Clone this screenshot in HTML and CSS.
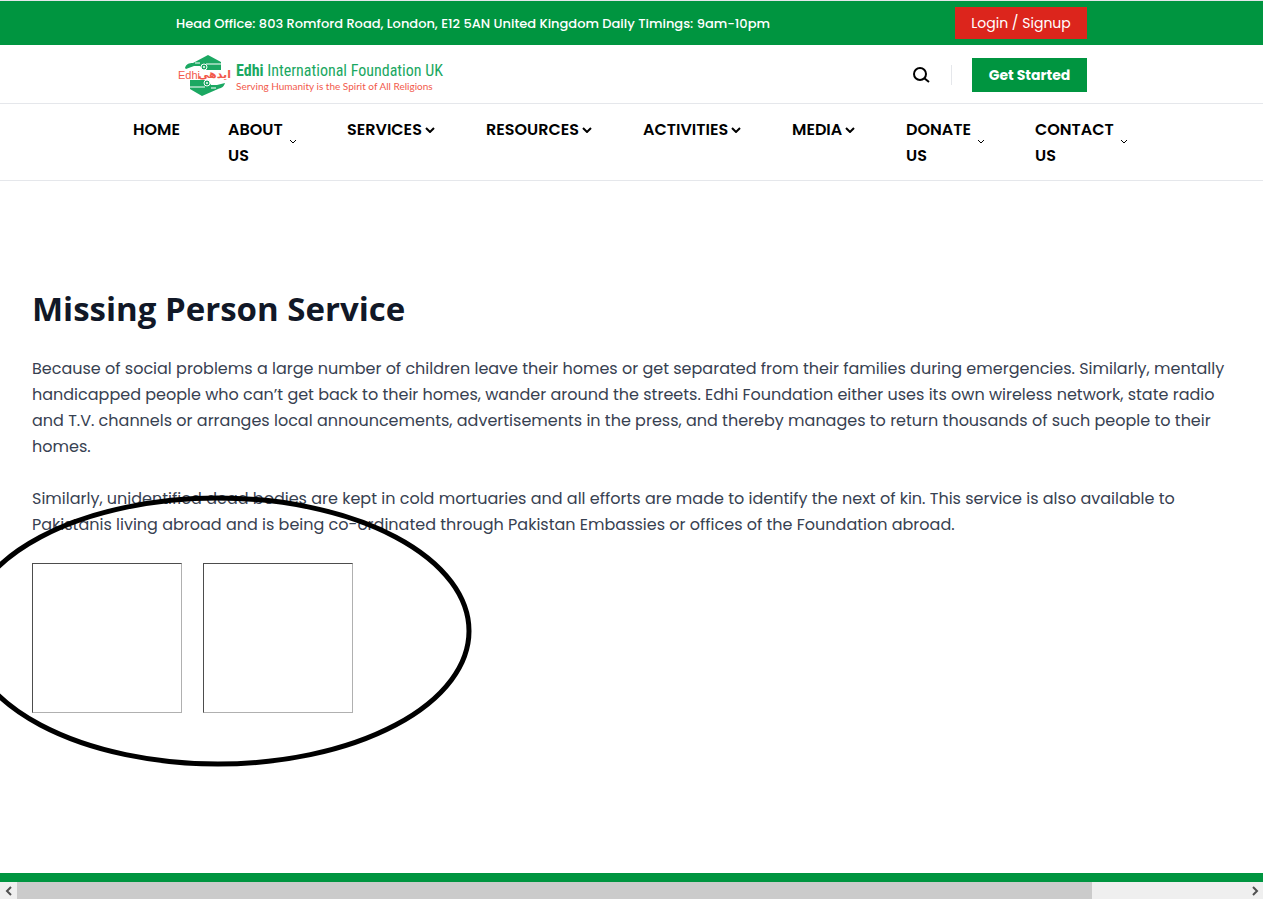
FILE: index.html
```html
<!DOCTYPE html>
<html lang="en">
<head>
<meta charset="utf-8">
<title>Missing Person Service - Edhi International Foundation UK</title>
<meta name="viewport" content="width=device-width, initial-scale=1">
<link rel="stylesheet" href="styles.css">
</head>
<body>
<div class="topbar">
  <div class="container topbar-row">
    <p class="office">Head Office: 803 Romford Road, London, E12 5AN United Kingdom Daily Timings: 9am-10pm</p>
    <button class="login" type="button">Login / Signup</button>
  </div>
</div>
<header class="header">
  <div class="container header-row">
    <a class="logo" href="#">
      <svg class="emblem" viewBox="0 0 54 42" width="54" height="42" aria-hidden="true">
        <path fill="#1ba862" d="M7 13C8 9 11 8 15 8L30 0L43 7V15H25L22 11L16 11L8 14Z"/>
        <path fill="#1ba862" d="M12 25H30L33 30L39 30L47 28C46 32 43 33 40 34L24 41L12 34Z"/>
        <path stroke="#fff" fill="none" d="M17 8H22M28 9H43M12 32H27M33 33H38"/>
        <circle cx="26" cy="12" r="3" fill="#1ba862" stroke="#fff"/>
        <circle cx="26" cy="12" r="1" fill="#fff"/>
        <circle cx="29" cy="28" r="3" fill="#1ba862" stroke="#fff"/>
        <circle cx="29" cy="28" r="1" fill="#fff"/>
        <text class="emblem-en" x="0" y="24">Edhi</text>
        <text class="emblem-ur" x="53" y="23" direction="rtl">ایدھی</text>
      </svg>
      <span class="wordmark">
        <span class="brand"><b>Edhi</b> International Foundation UK</span>
        <span class="tagline">Serving Humanity is the Spirit of All Religions</span>
      </span>
    </a>
    <div class="actions">
      <button class="search" type="button" aria-label="Search">
        <svg viewBox="0 0 18 18" width="18" height="18" fill="none" stroke="#000" stroke-width="2"><circle cx="8" cy="8" r="6"/><path d="M12 12L17 16"/></svg>
      </button>
      <span class="divider"></span>
      <button class="start" type="button">Get Started</button>
    </div>
  </div>
</header>
<nav class="nav" aria-label="Main">
  <ul class="menu">
    <li><a href="#">HOME</a></li>
    <li><a class="wrap" href="#">ABOUT US<svg class="chev small" viewBox="0 0 8 8"><path d="M1 1L4 4L7 1"/></svg></a></li>
    <li><a href="#">SERVICES<svg class="chev" viewBox="0 0 10 6"><path d="M1 1L5 5L9 1"/></svg></a></li>
    <li><a href="#">RESOURCES<svg class="chev" viewBox="0 0 10 6"><path d="M1 1L5 5L9 1"/></svg></a></li>
    <li><a href="#">ACTIVITIES<svg class="chev" viewBox="0 0 10 6"><path d="M1 1L5 5L9 1"/></svg></a></li>
    <li><a href="#">MEDIA<svg class="chev" viewBox="0 0 10 6"><path d="M1 1L5 5L9 1"/></svg></a></li>
    <li><a class="wrap" href="#">DONATE US<svg class="chev small" viewBox="0 0 8 8"><path d="M1 1L4 4L7 1"/></svg></a></li>
    <li><a class="wrap" href="#">CONTACT US<svg class="chev small" viewBox="0 0 8 8"><path d="M1 1L4 4L7 1"/></svg></a></li>
  </ul>
</nav>
<main class="content">
  <h1>Missing Person Service</h1>
  <p>Because of social problems a large number of children leave their homes or get separated from their families during emergencies. Similarly, mentally handicapped people who can’t get back to their homes, wander around the streets. Edhi Foundation either uses its own wireless network, state radio and T.V. channels or arranges local announcements, advertisements in the press, and thereby manages to return thousands of such people to their homes.</p>
  <p>Similarly, unidentified dead bodies are kept in cold mortuaries and all efforts are made to identify the next of kin. This service is also available to Pakistanis living abroad and is being co-ordinated through Pakistan Embassies or offices of the Foundation abroad.</p>
  <div class="photos">
    <div class="photo"></div>
    <div class="photo"></div>
    <svg class="ring" viewBox="0 0 508 272" width="508" height="272" aria-hidden="true"><ellipse cx="254" cy="136" rx="251" ry="133" fill="none" stroke="#000" stroke-width="5"/></svg>
  </div>
</main>
<footer class="footer"></footer>
<div class="scroller">
  <button type="button" aria-label="Scroll left"><svg viewBox="0 0 8 10" width="8" height="10"><path d="M6 1L2 5L6 9"/></svg></button>
  <div class="track"><div class="thumb"></div></div>
  <button type="button" aria-label="Scroll right"><svg viewBox="0 0 8 10" width="8" height="10"><path d="M2 1L6 5L2 9"/></svg></button>
</div>
</body>
</html>
```
FILE: styles.css
```css
* { box-sizing: border-box; margin: 0; padding: 0; }
body {
  min-height: 100vh;
  display: flex;
  flex-direction: column;
  overflow-x: hidden;
  background: #fff;
  color: #000;
  font: 16px/26px Poppins, Inter, "Open Sans", sans-serif;
}
button { border: 0; background: none; font: inherit; cursor: pointer; }
a { color: inherit; text-decoration: none; }
.container { width: 100%; max-width: 911px; margin: 0 auto; }

.topbar { background: #009540; border-top: 1px solid #e5e7eb; color: #fff; }
.topbar-row { display: flex; align-items: center; justify-content: space-between; height: 44px; }
.office { font-size: 13px; font-weight: 500; white-space: nowrap; padding-top: 1px; }
.login { background: #dc251c; color: #fff; font-size: 14px; width: 132px; height: 32px; white-space: nowrap; }

.header { border-bottom: 1px solid #e5e7eb; padding-top: 2px; }
.header-row { display: flex; align-items: center; justify-content: space-between; height: 56px; }
.logo { display: flex; align-items: center; gap: 4px; padding: 2px 0 0 2px; }
.emblem { overflow: visible; }
.emblem-en { font: 11px "Liberation Sans", sans-serif; fill: #f2594b; }
.emblem-ur { font: bold 11px "DejaVu Sans", sans-serif; fill: #f2594b; }
.wordmark { display: flex; flex-direction: column; white-space: nowrap; padding-top: 2px; }
.brand { color: #1ba862; font: 16px/18px "Liberation Sans Narrow", "Roboto Condensed", "Liberation Sans", sans-serif; }
.tagline { color: #f2594b; font: 10px/12px Lato, sans-serif; }
.actions { display: flex; align-items: center; gap: 20px; }
.search { display: flex; padding-right: 1px; }
.divider { width: 1px; height: 20px; background: #e5e7eb; }
.start { width: 115px; height: 34px; background: #009540; color: #fff; font-size: 14px; font-weight: 700; white-space: nowrap; }

.nav { border-bottom: 1px solid #e5e7eb; padding: 13px 0 11px; }
.menu {
  display: grid;
  grid-template-columns: 47px 71px 91px 109px 101px 66px 81px 95px;
  column-gap: 48px;
  justify-content: center;
  list-style: none;
  font-weight: 600;
}
.menu a { display: flex; align-items: center; gap: 3px; }
.menu a.wrap { justify-content: space-between; padding-right: 2px; }
.chev { width: 10px; height: 6px; flex: none; fill: none; stroke: #000; stroke-width: 2; }
.chev.small { width: 8px; height: 8px; stroke-width: 1; }

.content { flex: 1; padding: 108px 32px 0; color: #374151; }
h1 { color: #111827; font: 700 33px/40px "Open Sans", sans-serif; margin-bottom: 27px; }
.content p { margin-bottom: 26px; }
.content p:last-of-type { margin-bottom: 25px; }
.photos { position: relative; display: flex; gap: 21px; }
.photo { width: 150px; height: 150px; border: 1px solid; border-color: #4d4d4d #b0b0b0 #b0b0b0 #4d4d4d; }
.ring { position: absolute; left: -68px; top: -68px; pointer-events: none; }

.footer { height: 9px; background: #009540; }
.scroller { display: flex; height: 17px; background: #efefef; }
.scroller button { width: 17px; display: flex; align-items: center; justify-content: center; }
.scroller svg { fill: none; stroke: #505050; stroke-width: 2; }
.track { flex: 1; }
.thumb { width: 87.5%; height: 100%; background: #cbcbcb; }
```
